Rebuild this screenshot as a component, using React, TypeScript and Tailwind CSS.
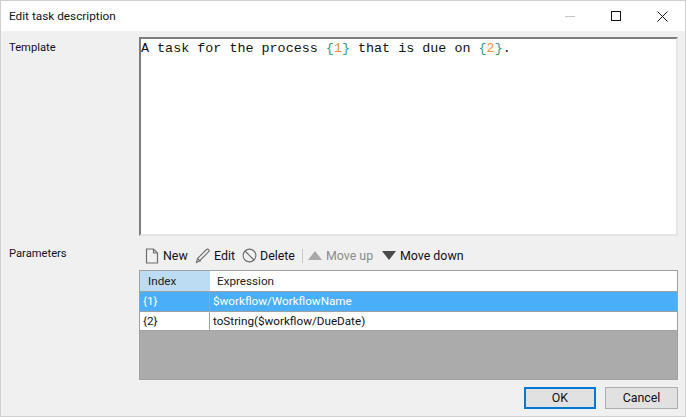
const ui = "font-['Roboto','Open_Sans',sans-serif]"

function Placeholder({ n }: { n: number }) {
  return (
    <span className="text-[#2f9c8c]">
      {'{'}
      <span className="text-[#ee8f3c]">{n}</span>
      {'}'}
    </span>
  )
}

function Toolbar() {
  return (
    <div className="flex h-[34px] items-center pl-[6px] pt-[6px] text-[12.4px] text-[#10101a]">
      <button className="flex w-[50px] items-center gap-[4px]">
        <svg width="14" height="16" viewBox="0 0 14 16" fill="none" stroke="#6e6e6e" strokeWidth="1.2">
          <path d="M1.5 1h7l4 4v10h-11z" />
          <path d="M8.5 1v4h4" />
        </svg>
        New
      </button>
      <button className="flex w-[47px] items-center gap-[3px]">
        <svg width="16" height="16" viewBox="0 0 16 16" fill="none" stroke="#6e6e6e" strokeWidth="1.1">
          <path d="M1.5 14.5l1-4 9-9c.8-.6 1.6-.4 2.2.2.6.7.6 1.4 0 2l-9 9z" />
          <path d="M2.5 10.5l3 3" />
        </svg>
        Edit
      </button>
      <button className="flex w-[60px] items-center gap-[3px]">
        <svg width="15" height="15" viewBox="0 0 16 16" fill="none" stroke="#6e6e6e" strokeWidth="1.2">
          <circle cx="8" cy="8" r="6.8" />
          <path d="M3.2 3.2l9.6 9.6" />
        </svg>
        Delete
      </button>
      <div className="mr-[5px] h-[14px] w-px bg-[#c8c8c8]" />
      <button className="flex w-[74px] items-center gap-[4px] text-[#8c8c8c]">
        <svg width="14" height="9" viewBox="0 0 14 9" fill="#a8a8a8">
          <path d="M7 0l7 9H0z" />
        </svg>
        Move up
      </button>
      <button className="flex items-center gap-[4px]">
        <svg width="14" height="9" viewBox="0 0 14 9" fill="#4a4a4a">
          <path d="M0 0h14L7 9z" />
        </svg>
        Move down
      </button>
    </div>
  )
}

function ParameterTable() {
  return (
    <div className="flex h-[110px] flex-col border border-[#a0a0a0] bg-[#ababab] text-[11.7px]">
      <div className="flex h-[20px] bg-white text-[#222]">
        <div className="w-[70px] bg-[#bcdcf4] pl-[8px] leading-[20px]">Index</div>
        <div className="pl-[7px] leading-[20px]">Expression</div>
      </div>
      <div className="flex h-[20px] border-t border-[#a0a0a0] bg-[#4aaef8] text-white">
        <div className="w-[70px] border-r border-[#a0a0a0] pl-[3px] leading-[19px]">{'{1}'}</div>
        <div className="pl-[3px] leading-[19px]">$workflow/WorkflowName</div>
      </div>
      <div className="flex h-[20px] border-y border-[#a0a0a0] bg-white text-[#111]">
        <div className="w-[70px] border-r border-[#a0a0a0] pl-[3px] leading-[18px]">{'{2}'}</div>
        <div className="pl-[3px] leading-[18px]">toString($workflow/DueDate)</div>
      </div>
    </div>
  )
}

export default function App() {
  return (
    <div className={`flex h-[417px] w-[686px] flex-col overflow-hidden border border-[#d0d0d0] bg-[#f0f0f0] ${ui}`}>
      {/* Title bar */}
      <div className="flex h-[30px] shrink-0 items-center justify-between bg-white pl-[8px]">
        <span className="pt-px text-[11.8px] text-[#14101e]">Edit task description</span>
        <div className="flex items-center">
          <div className="flex h-[30px] w-[46px] items-center justify-center">
            <div className="h-px w-[10px] bg-[#c4c4c4]" />
          </div>
          <div className="flex h-[30px] w-[46px] items-center justify-center">
            <svg width="10" height="10" viewBox="0 0 10 10" fill="none" stroke="#111" strokeWidth="1">
              <rect x="0.5" y="0.5" width="9" height="9" />
            </svg>
          </div>
          <div className="flex h-[30px] w-[46px] items-center justify-center">
            <svg width="11" height="11" viewBox="0 0 11 11" fill="none" stroke="#111" strokeWidth="1">
              <path d="M.5.5l10 10M10.5.5l-10 10" />
            </svg>
          </div>
        </div>
      </div>

      <div className="flex flex-1 flex-col pl-[8px] pr-[7px] pt-[6px]">
        <div className="flex">
          <div className="w-[130px] pt-[3px] text-[11.2px] text-[#14101e]">Template</div>
          <div className="h-[199px] flex-1 border-2 border-[#7d7d7d] border-r-[#e4e4e4] border-b-[#e4e4e4] bg-white pt-[2px] font-['Liberation_Mono',monospace] text-[13.4px] leading-[15px] text-[#111]">
            A task for the process <Placeholder n={1} /> that is due on <Placeholder n={2} />.
          </div>
        </div>

        <div className="flex">
          <div className="w-[130px] pt-[10px] text-[11.2px] text-[#14101e]">Parameters</div>
          <div className="flex-1">
            <Toolbar />
            <ParameterTable />
          </div>
        </div>

        <div className="flex justify-end gap-[9px] pt-[7px] text-[12.4px] text-[#111]">
          <button className="h-[22px] w-[72px] border-2 border-[#0078d7] bg-[#e1e1e1]">OK</button>
          <button className="h-[22px] w-[73px] border border-[#adadad] bg-[#e1e1e1]">Cancel</button>
        </div>
      </div>
    </div>
  )
}
